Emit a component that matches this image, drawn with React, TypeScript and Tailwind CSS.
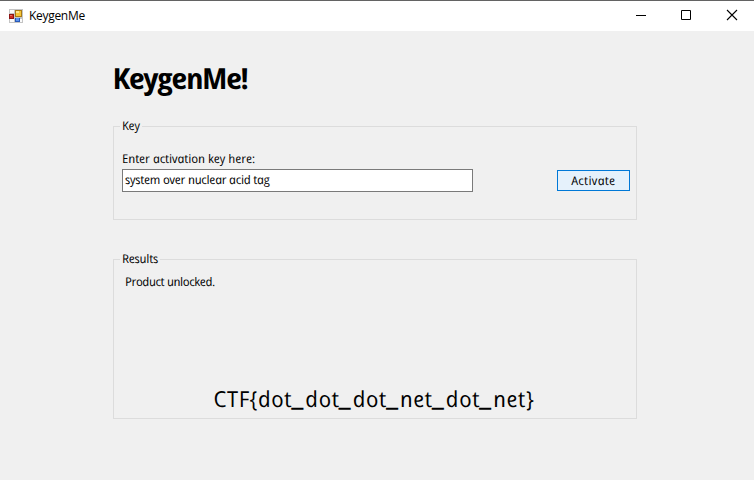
import type { ReactNode } from 'react';

function AppIcon() {
  return (
    <svg width="14" height="14" viewBox="0 0 14 14" shapeRendering="crispEdges">
      <path fill="#c4c4c4" d="M0 0h14v14H0z" />
      <path fill="#fafafa" d="M1 1h4v3H1zM1 10h4v3H1zM11 10h2v3h-2z" />
      <path fill="#8c1414" d="M0 5h5v5H0z" />
      <path fill="#cf2c20" d="M1 6h3v3H1z" />
      <path fill="#e87660" d="M1 6h2v1H1z" />
      <path fill="#a87a16" d="M6 1h7v7H6z" />
      <path fill="#f5c536" d="M7 2h5v5H7z" />
      <path fill="#fce58d" d="M7 2h3v2H7z" />
      <path fill="#2859b8" d="M6 9h5v4H6z" />
      <path fill="#5c94ee" d="M7 9h3v3H7z" />
    </svg>
  );
}

const hand = "inline-block whitespace-nowrap font-['Open_Sans',sans-serif] italic skew-x-[12deg]";

const flagParts = ['CTF{dot', 'dot', 'dot', 'net', 'dot', 'net}'];

function Group({ title, className, children }: { title: ReactNode; className: string; children: ReactNode }) {
  return (
    <fieldset className={`w-[524px] min-w-0 border border-[#dcdcdc] ${className}`}>
      <legend className="ml-[6px] flex h-[13px] items-center pl-[2px] pr-[2px] leading-[11px]">
        <span className={`${hand} pb-[2px] tracking-[-0.15px]`}>{title}</span>
      </legend>
      {children}
    </fieldset>
  );
}

export default function App() {
  return (
    <div className="flex h-[480px] w-[754px] flex-col overflow-hidden bg-[#f0f0f0] text-[12px] text-black">
      <header className="flex h-[31px] shrink-0 items-center border-t border-[#636363] bg-white pl-[9px]">
        <AppIcon />
        <span className="ml-[6px] font-['Open_Sans',sans-serif] text-[12px] leading-4 tracking-[-0.3px]">KeygenMe</span>
        <div className="ml-auto flex h-[30px]">
          <svg width="136" height="30" viewBox="0 0 136 30" fill="none" stroke="#000">
            <path d="M18 14.5h10" />
            <path d="M63.500 9.500h9v9h-9z" />
            <path strokeWidth="1.1" d="M109 9l10 10M119 9l-10 10" />
          </svg>
        </div>
      </header>

      <main className="flex flex-col pl-[113px] pt-[29px]">
        <h1 className="h-[36px] text-[29px] font-bold leading-[36px]">
          <span className={`${hand} -ml-px tracking-[-1.5px]`}>KeygenMe!</span>
        </h1>

        <Group className="mt-[24px] h-[100px]" title="Key">
          <div className="flex flex-col pl-[8px] pr-[6px] pt-[18px]">
            <label className="h-[16px] leading-[16px]">
              <span className={`${hand} tracking-[-0.02px]`}>Enter activation key here:</span>
            </label>
            <div className="mt-[2px] flex items-center justify-between">
              <div className="h-[23px] w-[351px] border border-[#7a7a7a] bg-white pl-[2px] leading-[20px]">
                <span className={`${hand} tracking-[-0.22px]`}>system over nuclear acid tag</span>
              </div>
              <button className="flex h-[21px] w-[73px] items-center justify-center border border-[#0078d7] bg-[#e5f1fb] leading-[19px]">
                <span className={`${hand} tracking-[0.35px]`}>Activate</span>
              </button>
            </div>
          </div>
        </Group>

        <Group className="mt-[33px] h-[166px]" title="Results">
          <div className="flex h-[152px] flex-col justify-between pl-[11px] pt-[8px]">
            <p className="h-[16px] leading-[16px]">
              <span className={`${hand} tracking-[-0.35px]`}>Product unlocked.</span>
            </p>
            <p className="h-[34px] pl-[88px] text-[22px] leading-[29px]">
              <span className={`${hand} tracking-[0.6px]`}>
                {flagParts.map((part, i) => (
                  <span key={i}>
                    {i > 0 && <span className="align-[2px] text-[31px] leading-[0] tracking-[1px]">_</span>}
                    {part}
                  </span>
                ))}
              </span>
            </p>
          </div>
        </Group>
      </main>
    </div>
  );
}
